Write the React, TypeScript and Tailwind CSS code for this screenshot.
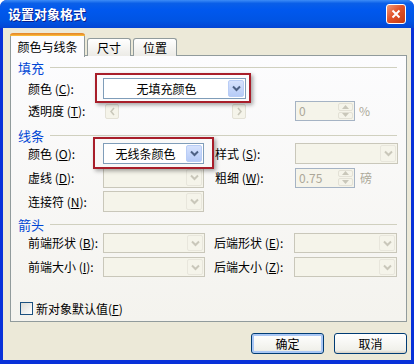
import React from 'react';

const font = { fontFamily: '"Noto Sans CJK SC", "Noto Sans", sans-serif' };

const Chevron = ({ color }: { color: string }) => (
  <svg width="9" height="7" viewBox="0 0 9 7">
    <polyline points="1,1.5 4.5,5 8,1.5" fill="none" stroke={color} strokeWidth="2" />
  </svg>
);

const Label = ({ text, k }: { text: string; k: string }) => (
  <span className="whitespace-nowrap">
    {text} (<span className="underline">{k}</span>):
  </span>
);

const Combo = ({ w, text, enabled }: { w: string; text?: string; enabled?: boolean }) => (
  <div
    className={`${w} h-full flex border p-[1px] ${
      enabled ? 'border-[#7f9db9] bg-white' : 'border-[#c9c7ba] bg-[#f5f4ea]'
    }`}
  >
    <div className="flex-1 flex items-center justify-center text-[12px] text-black">{text}</div>
    {enabled ? (
      <div className="w-[16px] h-full rounded-[2px] border border-[#b9cdf6] bg-[linear-gradient(to_bottom,#d6e2fd,#b6cbf7)] flex items-center justify-center">
        <Chevron color="#4d6185" />
      </div>
    ) : (
      <div className="w-[16px] h-full rounded-[2px] border border-[#e8e6dc] bg-[#f5f4ea] flex items-center justify-center">
        <Chevron color="#c9c7ba" />
      </div>
    )}
  </div>
);

const Spin = ({ text }: { text: string }) => (
  <div className="w-[60px] h-full flex border border-[#a5b3c4] bg-[#f5f4ea] p-[1px]">
    <div className="flex-1 flex items-center pl-[2px] text-[12px] text-[#aca899]">{text}</div>
    <div className="w-[15px] h-full flex flex-col gap-[1px]">
      <div className="flex-1 rounded-[2px] border border-[#e3e1d6] flex items-center justify-center">
        <svg width="7" height="4" viewBox="0 0 7 4">
          <polygon points="0,4 3.5,0 7,4" fill="#c9c7ba" />
        </svg>
      </div>
      <div className="flex-1 rounded-[2px] border border-[#e3e1d6] flex items-center justify-center">
        <svg width="7" height="4" viewBox="0 0 7 4">
          <polygon points="0,0 3.5,4 7,0" fill="#c9c7ba" />
        </svg>
      </div>
    </div>
  </div>
);

const ArrowBtn = ({ dir }: { dir: 'l' | 'r' }) => (
  <div className="w-[14px] h-[15px] rounded-[2px] border border-[#e3e1d6] bg-[#f5f4ea] flex items-center justify-center">
    <svg width="5" height="9" viewBox="0 0 5 9">
      <polyline
        points={dir === 'l' ? '4,1 1,4.5 4,8' : '1,1 4,4.5 1,8'}
        fill="none"
        stroke="#c9c7ba"
        strokeWidth="1.6"
      />
    </svg>
  </div>
);

const Header = ({ text, mt }: { text: string; mt: string }) => (
  <div className={`${mt} h-[14px] flex items-center pl-[7px] pr-[9px]`}>
    <span className="text-[13px] leading-none text-[#0046d5]">{text}</span>
    <div className="flex-1 ml-[6px] h-px bg-[#d0d0bf]" />
  </div>
);

const Mark = ({ cls }: { cls: string }) => (
  <div
    className={`absolute ${cls} border-2 border-[#a81e2a] shadow-[2px_2px_4px_rgba(0,0,0,0.35)] pointer-events-none`}
  />
);

export default function App() {
  return (
    <div className="w-[420px] h-[364px] bg-white text-[12px] text-black" style={font}>
      <div className="w-[414px] h-[364px] rounded-t-[7px] bg-[#0831d9] flex flex-col overflow-hidden">
        <div className="h-[28px] flex items-center pl-[8px] pr-[8px] bg-[linear-gradient(to_bottom,#3d8cf7,#0a5fe8_12%,#0058ee_35%,#0054e3_75%,#0345d4)]">
          <span className="flex-1 text-white font-bold text-[13px] [text-shadow:1px_1px_0_#0a1e8c]">
            设置对象格式
          </span>
          <div className="w-[20px] h-[20px] rounded-[3px] border border-white bg-[linear-gradient(135deg,#f09a7a,#e2532a_45%,#c23a12)] flex items-center justify-center">
            <svg width="10" height="10" viewBox="0 0 10 10">
              <path d="M1.5 1.5 L8.5 8.5 M8.5 1.5 L1.5 8.5" stroke="white" strokeWidth="2" />
            </svg>
          </div>
        </div>

        <div className="flex-1 mx-[3px] mb-[4px] bg-[#ece9d8] flex flex-col pl-[7px] pr-[4px]">
          {/* tabs */}
          <div className="mt-[5px] h-[23px] flex items-end relative z-10">
            <div className="w-[75px] h-[23px] -mb-px bg-[#fcfcfe] border-x border-[#919b9c] rounded-t-[3px] relative flex items-center justify-center text-[12px]">
              <div className="absolute -top-px -left-px -right-px h-[3px] rounded-t-[3px] bg-[#e68b2c] border-t border-[#e68b2c] [background:linear-gradient(to_bottom,#e68b2c,#ffc73c)]" />
              <span className="mt-[2px]">颜色与线条</span>
            </div>
            <div className="ml-[2px] w-[44px] h-[18px] border border-b-0 border-[#919b9c] rounded-t-[3px] bg-[linear-gradient(to_bottom,#ffffff,#ecebe6)] flex items-center justify-center text-[12px]">
              尺寸
            </div>
            <div className="ml-[2px] w-[44px] h-[18px] border border-b-0 border-[#919b9c] rounded-t-[3px] bg-[linear-gradient(to_bottom,#ffffff,#ecebe6)] flex items-center justify-center text-[12px]">
              位置
            </div>
          </div>

          {/* panel */}
          <div className="-mt-px h-[267px] border border-[#919b9c] bg-[linear-gradient(to_bottom,#fcfcfe,#f4f3ee)] flex flex-col">
            <Header text="填充" mt="mt-[4px]" />
            <div className="mt-[4px] h-[21px] flex items-center pl-[17px]">
              <div className="w-[75px]"><Label text="颜色" k="C" /></div>
              <div className="relative h-full">
                <Combo w="w-[143px]" text="无填充颜色" enabled />
                <Mark cls="-left-[8px] -right-[5px] -top-[5px] -bottom-[4px]" />
              </div>
            </div>
            <div className="mt-[2px] h-[20px] flex items-center pl-[17px]">
              <div className="w-[77px]"><Label text="透明度" k="T" /></div>
              <ArrowBtn dir="l" />
              <div className="w-[113px]" />
              <ArrowBtn dir="r" />
              <div className="ml-[49px] h-full">
                <Spin text="0" />
              </div>
              <span className="ml-[4px] text-[#aca899]">%</span>
            </div>

            <Header text="线条" mt="mt-[7px]" />
            <div className="mt-[1px] h-[21px] flex items-center pl-[17px]">
              <div className="w-[75px]"><Label text="颜色" k="O" /></div>
              <div className="relative h-full">
                <Combo w="w-[101px]" text="无线条颜色" enabled />
                <Mark cls="-left-[10px] -right-[10px] -top-[6px] -bottom-[5px]" />
              </div>
              <div className="ml-[11px] w-[80px]"><Label text="样式" k="S" /></div>
              <Combo w="w-[103px]" />
            </div>
            <div className="mt-[3px] h-[21px] flex items-center pl-[17px]">
              <div className="w-[75px]"><Label text="虚线" k="D" /></div>
              <Combo w="w-[101px]" />
              <div className="ml-[11px] w-[80px]"><Label text="粗细" k="W" /></div>
              <div className="h-[20px]">
                <Spin text="0.75" />
              </div>
              <span className="ml-[5px] text-[#aca899]">磅</span>
            </div>
            <div className="mt-[3px] h-[21px] flex items-center pl-[17px]">
              <div className="w-[75px]"><Label text="连接符" k="N" /></div>
              <Combo w="w-[101px]" />
            </div>

            <Header text="箭头" mt="mt-[5px]" />
            <div className="mt-[2px] h-[20px] flex items-center pl-[17px]">
              <div className="w-[75px]"><Label text="前端形状" k="B" /></div>
              <Combo w="w-[102px]" />
              <div className="ml-[9px] w-[80px]"><Label text="后端形状" k="E" /></div>
              <Combo w="w-[103px]" />
            </div>
            <div className="mt-[4px] h-[20px] flex items-center pl-[17px]">
              <div className="w-[75px]"><Label text="前端大小" k="I" /></div>
              <Combo w="w-[102px]" />
              <div className="ml-[9px] w-[80px]"><Label text="后端大小" k="Z" /></div>
              <Combo w="w-[103px]" />
            </div>

            <div className="mt-[25px] h-[13px] flex items-center pl-[9px]">
              <div className="w-[13px] h-[13px] border border-[#1c5180] bg-[linear-gradient(135deg,#dcdcd7,#ffffff)]" />
              <span className="ml-[3px]">
                新对象默认值(<span className="underline">F</span>)
              </span>
            </div>
          </div>

          {/* buttons */}
          <div className="mt-[11px] flex justify-end gap-[10px]">
            <div className="w-[73px] h-[21px] rounded-[3px] border border-[#003c74] bg-[linear-gradient(to_bottom,#ffffff,#f0f0ea_85%,#d6d0c5)] shadow-[inset_0_0_0_2px_#a9c7f5] flex items-center justify-center">
              确定
            </div>
            <div className="w-[73px] h-[21px] rounded-[3px] border border-[#003c74] bg-[linear-gradient(to_bottom,#ffffff,#f0f0ea_85%,#d6d0c5)] flex items-center justify-center">
              取消
            </div>
          </div>
        </div>
      </div>
    </div>
  );
}
